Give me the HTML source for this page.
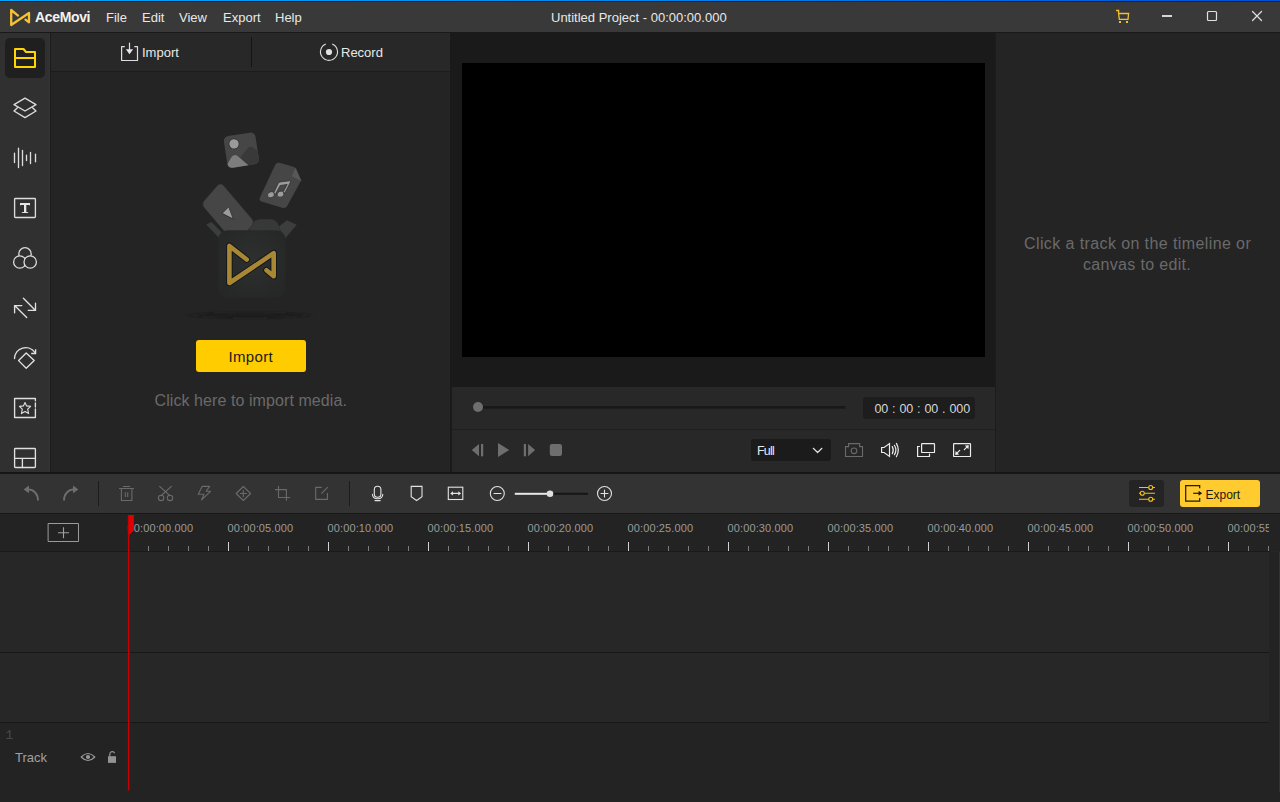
<!DOCTYPE html>
<html><head><meta charset="utf-8">
<style>
*{margin:0;padding:0;box-sizing:border-box}
html,body{width:1280px;height:802px;overflow:hidden;background:#262626;font-family:"Liberation Sans",sans-serif;color:#e6e6e6}
.abs{position:absolute}
.txt{white-space:nowrap;line-height:1}
#topline{left:0;top:0;width:1280px;height:1px;background:linear-gradient(90deg,#00a8ff 0%,#0088f0 50%,#0050d8 100%)}
#topline2{left:0;top:1px;width:1280px;height:1px;background:#1c1c1c}
#title{left:0;top:2px;width:1280px;height:30px;background:#393939}
#tline{left:0;top:32px;width:1280px;height:1px;background:#191919}
#side{left:0;top:33px;width:50px;height:439px;background:#303030;border-right:1px solid #343434}
#sideb{left:50px;top:33px;width:1px;height:439px;background:#1b1b1b}
#media{left:51px;top:33px;width:399px;height:439px;background:#242424}
#mhead{left:51px;top:33px;width:399px;height:38px;background:#282828}
#mheadb{left:51px;top:71px;width:399px;height:1px;background:#1c1c1c}
#prev{left:450px;top:33px;width:546px;height:439px;background:#1a1a1a}
#video{left:462px;top:63px;width:523px;height:294px;background:#000}
#ctrl{left:452px;top:387px;width:543px;height:85px;background:#282828}
#ctrlb{left:452px;top:429px;width:543px;height:1px;background:#1f1f1f}
#props{left:996px;top:33px;width:284px;height:439px;background:#242424}
#propsb{left:995px;top:33px;width:1px;height:439px;background:#1c1c1c}
#midb{left:0;top:472px;width:1280px;height:2px;background:#161616}
#tool{left:0;top:474px;width:1280px;height:39px;background:#333333}
#toolb{left:0;top:513px;width:1280px;height:1px;background:#181818}
#ruler{left:0;top:514px;width:1280px;height:37px;background:#232323}
#rulerb{left:0;top:551px;width:1270px;height:1px;background:#1a1a1a}
#tracks{left:0;top:552px;width:1280px;height:250px;background:#232323}
#trow{left:0;top:552px;width:1269px;height:170px;background:#272727}
#tl1{left:0;top:652px;width:1269px;height:1px;background:#181818}
#tl2{left:0;top:722px;width:1269px;height:1px;background:#181818}
#scr{left:1279px;top:552px;width:1px;height:240px;background:#333}
.tc{top:402.5px;font-size:12.5px;color:#d6d6d6}
.mn{top:11px;font-size:13px;color:#e8e8e8}
.rl{top:523px;font-size:11px;color:#9a9a9a;letter-spacing:0.12px}
</style></head><body>
<div class="abs" id="topline"></div>
<div class="abs" id="topline2"></div>
<div class="abs" id="title"></div>
<div class="abs" id="tline"></div>
<div class="abs" id="side"></div>
<div class="abs" id="sideb"></div>
<div class="abs" id="media"></div>
<div class="abs" id="mhead"></div>
<div class="abs" id="mheadb"></div>
<div class="abs" id="prev"></div>
<div class="abs" id="video"></div>
<div class="abs" id="ctrl"></div>
<div class="abs" id="ctrlb"></div>
<div class="abs" id="propsb"></div>
<div class="abs" id="props"></div>
<div class="abs" id="midb"></div>
<div class="abs" id="tool"></div>
<div class="abs" id="toolb"></div>
<div class="abs" id="ruler"></div>
<div class="abs" id="rulerb"></div>
<div class="abs" id="tracks"></div>
<div class="abs" id="trow"></div>
<div class="abs" id="tl1"></div>
<div class="abs" id="tl2"></div>
<div class="abs" id="scr"></div>

<!-- boxes -->
<div class="abs" style="left:5px;top:38px;width:40px;height:40px;background:#1f1f1f;border-radius:5px"></div>
<div class="abs" style="left:251px;top:37px;width:1px;height:30px;background:#161418"></div>
<div class="abs" style="left:863px;top:397px;width:112px;height:22px;background:#1d1d1d;border-radius:3px"></div>
<div class="abs" style="left:751px;top:439px;width:80px;height:22px;background:#1b1b1b;border-radius:3px"></div>
<div class="abs" style="left:98px;top:481px;width:1px;height:25px;background:#1c1c1c"></div>
<div class="abs" style="left:349px;top:481px;width:1px;height:25px;background:#1c1c1c"></div>
<div class="abs" style="left:1129px;top:480px;width:35px;height:27px;background:#242424;border-radius:3px"></div>
<div class="abs" style="left:1180px;top:480px;width:80px;height:27px;background:#ffcb2e;border-radius:3px"></div>
<div class="abs" style="left:196px;top:340px;width:110px;height:32px;background:#ffcc00;border-radius:3px"></div>

<!-- TITLE TEXT -->
<div class="abs txt" style="left:35px;top:10px;font-size:14px;font-weight:bold;color:#f2f2f2;letter-spacing:-0.35px">AceMovi</div>
<div class="abs txt mn" style="left:106px">File</div>
<div class="abs txt mn" style="left:142px">Edit</div>
<div class="abs txt mn" style="left:179px">View</div>
<div class="abs txt mn" style="left:223px">Export</div>
<div class="abs txt mn" style="left:275px">Help</div>
<div class="abs txt mn" style="left:551px">Untitled Project - 00:00:00.000</div>

<div class="abs txt" style="left:142px;top:46px;font-size:13px;color:#e8e8e8">Import</div>
<div class="abs txt" style="left:341px;top:46px;font-size:13px;color:#e8e8e8">Record</div>

<div class="abs txt" style="left:228.5px;top:349px;font-size:15px;color:#1a1a1a;letter-spacing:0.35px">Import</div>
<div class="abs txt" style="left:154.5px;top:393px;font-size:16px;color:#6a6a6a;letter-spacing:0.08px">Click here to import media.</div>

<div class="abs txt" style="left:1024px;top:236px;font-size:16px;color:#6a6a6a;letter-spacing:0.4px">Click a track on the timeline or</div>
<div class="abs txt" style="left:1083px;top:257px;font-size:16px;color:#6a6a6a;letter-spacing:0.33px">canvas to edit.</div>

<div class="abs txt tc" style="left:874.4px">00</div>
<div class="abs txt tc" style="left:892px">:</div>
<div class="abs txt tc" style="left:899.4px">00</div>
<div class="abs txt tc" style="left:917px">:</div>
<div class="abs txt tc" style="left:924.4px">00</div>
<div class="abs txt tc" style="left:942px">.</div>
<div class="abs txt tc" style="left:949.4px">000</div>
<div class="abs txt" style="left:757px;top:444.5px;font-size:12.5px;color:#e8e8e8;letter-spacing:-0.8px">Full</div>
<div class="abs txt" style="left:1205.5px;top:489px;font-size:12px;color:#1a1a1a">Export</div>

<!-- ruler labels -->
<div class="abs txt rl" style="left:127.5px">00:00:00.000</div>
<div class="abs txt rl" style="left:227.5px">00:00:05.000</div>
<div class="abs txt rl" style="left:327.5px">00:00:10.000</div>
<div class="abs txt rl" style="left:427.5px">00:00:15.000</div>
<div class="abs txt rl" style="left:527.5px">00:00:20.000</div>
<div class="abs txt rl" style="left:627.5px">00:00:25.000</div>
<div class="abs txt rl" style="left:727.5px">00:00:30.000</div>
<div class="abs txt rl" style="left:827.5px">00:00:35.000</div>
<div class="abs txt rl" style="left:927.5px">00:00:40.000</div>
<div class="abs txt rl" style="left:1027.5px">00:00:45.000</div>
<div class="abs txt rl" style="left:1127.5px">00:00:50.000</div>
<div class="abs" style="left:1270px;top:514px;width:10px;height:37px;background:#232323"></div>
<div class="abs txt rl" style="left:1227.5px;width:41.5px;overflow:hidden">00:00:55.000</div>

<div class="abs txt" style="left:5.3px;top:729px;font-size:13.5px;color:#484848;font-family:'Liberation Mono',monospace">1</div>
<div class="abs txt" style="left:15px;top:751px;font-size:13px;color:#a0a0a0">Track</div>

<!-- ICONS -->
<svg class="abs" style="left:0;top:0" width="1280" height="802" viewBox="0 0 1280 802" fill="none" stroke-linecap="round" stroke-linejoin="round">
  <!-- logo -->
  <path d="M18,15.6L11.2,10V25L29,13V22.3L25.5,19.6" stroke="#f6c232" stroke-width="2.3"/>
  <!-- cart -->
  <g stroke="#f0c030" stroke-width="1.3" stroke-linecap="butt" stroke-linejoin="miter">
    <path d="M1116,10.5H1118.6V13.5"/>
    <path d="M1118.6,13.5H1128.6L1128,19.4H1119.3Z"/>
  </g>
  <rect x="1119" y="21" width="2" height="2" fill="#f0c030"/>
  <rect x="1126" y="21" width="2" height="2" fill="#f0c030"/>
  <!-- window controls -->
  <rect x="1162" y="15" width="10" height="2" fill="#d6d6d6"/>
  <rect x="1207.5" y="11.5" width="9" height="9" stroke="#e0e0e0" stroke-width="1.2" rx="1"/>
  <path d="M1252.5,11.5L1261.5,20.5M1261.5,11.5L1252.5,20.5" stroke="#e0e0e0" stroke-width="1.2"/>

  <!-- sidebar -->
  <path d="M15,49H23.5L26,52H35V67H15ZM15,58H35" stroke="#ffd400" stroke-width="2" stroke-linejoin="round"/>
  <g stroke="#dcdcdc" stroke-width="1.35">
    <path d="M25,98.2L36,104.6L25,111L14,104.6Z"/>
    <path d="M17.4,107.8L14,111L25,117.6L36,111L32.6,107.8"/>
    <path d="M14.5,153.2V162.6M18.5,148.2V167.6M22.5,150.3V165.6M26.5,155.2V160.6M30.5,152.3V163.6M35.5,154.2V161.8"/>
    <rect x="14.6" y="198.5" width="20.8" height="19" rx="0.8"/>
  </g>
  <path d="M20,203H30V205.9L29.4,204.9H26.3V212L28.2,212.2V213H21.8V212.2L24,212V204.9H20.6L20,205.9Z" fill="#e6e6e6"/>
  <g stroke="#dcdcdc" stroke-width="1.3" fill="#303030">
    <circle cx="25" cy="253.9" r="6.2"/>
    <circle cx="19.8" cy="262" r="6.2"/>
    <circle cx="30.2" cy="262" r="6.2"/>
  </g>
  <g stroke="#e0e0e0" stroke-width="1.35">
    <path d="M21.8,305.6H14.6V312.8M14.6,305.6L26.7,317.6"/>
    <path d="M28.3,310.4H35.5V303.2M35.5,310.4L23.4,298.3"/>
    <path d="M26.2,353L34.2,360.6L26.2,368.3L18.6,360.6Z"/>
    <path d="M14.5,358.6A11.2,11.2 0 0 1 35,352.6"/>
    <path d="M35.6,349.2V353.5H31.2" stroke-linecap="butt" stroke-linejoin="miter"/>
    <path d="M35.4,400.8V398.5H14.6V417.5H35.4V409M35.4,403V407"/>
    <path d="M25,402.6L26.6,405.9L30.6,406.4L27.7,409.1L28.6,413.6L25,411.5L21.4,413.6L22.3,409.1L19.4,406.4L23.4,405.9Z" stroke-width="1.1"/>
    <rect x="14.6" y="448.5" width="20.8" height="19" rx="0.8"/>
    <path d="M14.6,458.3H35.4M22.4,458.3V467.5"/>
  </g>

  <!-- media header icons -->
  <g stroke="#dedede" stroke-width="1.2">
    <path d="M124.8,46.6H121.6V60.5H137.5V46.6H134.3" stroke-linecap="butt" stroke-linejoin="round"/>
    <path d="M129.5,43V50"/>
  </g>
  <path d="M125.9,49.3H133.1L129.5,54.2Z" fill="#e6e6e6"/>
  <path d="M332.2,44A8.5,8.5 0 1 1 325.8,44" stroke="#dedede" stroke-width="1.1" stroke-linecap="butt"/>
  <circle cx="329" cy="52" r="3.1" fill="#e0e0e0"/>

  <!-- preview controls -->
  <circle cx="478" cy="407" r="5" fill="#6e6e6e"/>
  <rect x="483" y="406" width="362.5" height="2.6" fill="#181818"/>
  <path d="M479,444V456.3L471.8,450.1Z" fill="#6e6e6e"/>
  <rect x="481" y="444" width="2.2" height="12.3" fill="#6e6e6e"/>
  <path d="M498,443V457L509.2,450Z" fill="#6e6e6e"/>
  <rect x="523.8" y="444" width="2.2" height="12.3" fill="#6e6e6e"/>
  <path d="M528.1,444V456.3L535.1,450.1Z" fill="#6e6e6e"/>
  <rect x="549.8" y="444" width="12.2" height="12" rx="2.2" fill="#6e6e6e"/>
  <path d="M813.3,448.3L817.6,452.5L821.9,448.3" stroke="#e0e0e0" stroke-width="1.2"/>
  <g stroke="#6a6a6a" stroke-width="1.1">
    <path d="M845.5,456.5V446.6H848.6V443.6H859.6V446.6H862.5V456.5Z" stroke-linejoin="miter"/>
    <circle cx="854" cy="450.8" r="2.8"/>
  </g>
  <g stroke="#ececec" stroke-width="1.2">
    <path d="M881.6,447.5H884.1L889.5,443.6V456.4L884.1,452.5H881.6Z" stroke-linejoin="miter"/>
    <path d="M892.3,446.6Q894.2,450.1 892.3,453.7M894.4,445.3Q897.4,450.1 894.4,454.8M896.4,443.4Q900.2,450.1 896.4,456.7"/>
    <path d="M919.5,446.5H917.6V456.5H929.5V454.2" stroke-linejoin="miter"/>
    <rect x="921.6" y="443.6" width="12.9" height="8.9" rx="0.6"/>
    <rect x="953.6" y="443.6" width="16.9" height="12.9" rx="0.6"/>
    <path d="M956.5,453.6L959.7,450.4M964.3,449.6L967.8,446.1"/>
  </g>
  <path d="M955.2,454.9L955.6,450.9L959.2,454.5Z M968.8,445.2L968.4,449.2L964.8,445.6Z" fill="#ececec"/>

  <!-- toolbar -->
  <g stroke="#6e6e6e" stroke-width="1.9" stroke-linecap="butt">
    <path d="M28,489.4C34,489.4 38,494 38,500.6"/>
    <path d="M74,489.4C68,489.4 64,494 64,500.6"/>
  </g>
  <path d="M23.6,489.4L29,485.6V493.2Z M78.4,489.4L73,485.6V493.2Z" fill="#6e6e6e"/>
  <g stroke="#6a6a6a" stroke-width="1.1" stroke-linecap="butt" stroke-linejoin="miter">
    <path d="M119,488.5H134M123,486.5H130M121.4,488.5V500.5H131.9V488.5M125.3,492.3V497M127.7,492.3V497"/>
    <path d="M159.3,486.2L170.3,496M171.7,486.2L160.7,496"/>
    <circle cx="161.1" cy="497.9" r="2.7"/>
    <circle cx="170" cy="497.9" r="2.7"/>
    <path d="M202.1,486.4H209.6L206.1,491.3H210.5L201.6,499.9L204,494.3H198.3Z" stroke-linejoin="round"/>
    <path d="M243.3,486.5L250.6,493.5L243.3,500.5L236.2,493.5Z" stroke-linejoin="round"/>
    <path d="M240,493.5H246.8M243.3,490V497"/>
    <path d="M278.5,486V497.5H290M275,489.6H286.4V500.8"/>
    <path d="M321.7,487.4H315.7V499.4H327.4V493.1M321.4,493.7L327.7,487.1"/>
  </g>
  <g stroke="#e2e2e2" stroke-width="1.1">
    <rect x="374.3" y="486.2" width="6.6" height="11" rx="3.3"/>
    <path d="M372.4,494.3Q372.6,498.8 377.6,498.8Q382.6,498.8 382.8,494.3M375,500.6H380.2"/>
    <path d="M411.2,486.4H422V496.8L416.6,500.5L411.2,496.8Z" stroke-linejoin="miter"/>
    <rect x="448.3" y="487.2" width="14.5" height="12.3" stroke-linejoin="miter"/>
    <path d="M452,493.4H459.5"/>
    <circle cx="497.3" cy="493.5" r="7"/>
    <path d="M494,493.5H501"/>
    <circle cx="604.5" cy="493.5" r="7"/>
    <path d="M601,493.5H608M604.5,490V497"/>
  </g>
  <path d="M450.2,493.4L453,491.2V495.6Z M461.1,493.4L458.3,491.2V495.6Z" fill="#e2e2e2"/>
  <rect x="514.8" y="492.8" width="35" height="2" fill="#e8e8e8"/>
  <rect x="550" y="492.8" width="38" height="2" fill="#161616"/>
  <circle cx="550" cy="493.8" r="3.3" fill="#e0e0e0"/>
  <g stroke="#f0c020" stroke-width="1.1" stroke-linecap="butt">
    <path d="M1139,487.5H1148.7M1152.7,487.5H1155M1139,493.3H1140.3M1144.3,493.3H1155M1139,499.2H1148.7M1152.7,499.2H1155"/>
    <circle cx="1150.7" cy="487.5" r="2"/>
    <circle cx="1142.3" cy="493.3" r="2"/>
    <circle cx="1150.7" cy="499.2" r="2"/>
  </g>
  <g stroke="#1a1a1a" stroke-width="1.2" stroke-linejoin="miter" stroke-linecap="butt">
    <path d="M1199.7,488.3V485.6H1185.7V501.1H1199.7V498"/>
    <path d="M1193.2,493.3H1199"/>
  </g>
  <path d="M1202.2,493.3L1198.6,490.8V495.8Z" fill="#1a1a1a"/>

  <!-- ruler -->
  <rect x="48.5" y="523.5" width="30" height="18" stroke="#9a9a9a" stroke-width="1"/>
  <path d="M58,532.8H69M63.5,527.3V538.3" stroke="#a0a0a0" stroke-width="1.1" stroke-linecap="butt"/>
  <path d="M148.5,546V551M168.5,546V551M188.5,546V551M208.5,546V551M248.5,546V551M268.5,546V551M288.5,546V551M308.5,546V551M348.5,546V551M368.5,546V551M388.5,546V551M408.5,546V551M448.5,546V551M468.5,546V551M488.5,546V551M508.5,546V551M548.5,546V551M568.5,546V551M588.5,546V551M608.5,546V551M648.5,546V551M668.5,546V551M688.5,546V551M708.5,546V551M748.5,546V551M768.5,546V551M788.5,546V551M808.5,546V551M848.5,546V551M868.5,546V551M888.5,546V551M908.5,546V551M948.5,546V551M968.5,546V551M988.5,546V551M1008.5,546V551M1048.5,546V551M1068.5,546V551M1088.5,546V551M1108.5,546V551M1148.5,546V551M1168.5,546V551M1188.5,546V551M1208.5,546V551M1248.5,546V551M1268.5,546V551" stroke="#7c7c7c" stroke-width="1" stroke-linecap="butt"/>
  <path d="M128.5,542V551M228.5,542V551M328.5,542V551M428.5,542V551M528.5,542V551M628.5,542V551M728.5,542V551M828.5,542V551M928.5,542V551M1028.5,542V551M1128.5,542V551M1228.5,542V551" stroke="#d2d2d2" stroke-width="1" stroke-linecap="butt"/>
  <!-- playhead -->
  <path d="M127.9,515H133.9V530.2L129.3,535H127.9Z" fill="#e00000"/>
  <rect x="127.9" y="515" width="1.4" height="275.5" fill="#c80000"/>

  <!-- track header icons -->
  <path d="M81.2,757Q88,750 94.8,757Q88,764 81.2,757Z" stroke="#999" stroke-width="1.2"/>
  <circle cx="88" cy="757" r="2.1" fill="#999"/>
  <rect x="108" y="756.2" width="8" height="6.7" fill="#939393"/>
  <path d="M109.8,756.5V754A2.5,2.5 0 0 1 114.6,753.2" stroke="#939393" stroke-width="1.2" stroke-linecap="butt"/>

  <!-- media illustration -->
  <defs>
    <radialGradient id="bg1" cx="0.5" cy="0.45" r="0.6">
      <stop offset="0" stop-color="#2e2f2f"/>
      <stop offset="1" stop-color="#262727"/>
    </radialGradient>
    <filter id="blr" x="-50%" y="-300%" width="200%" height="700%" filterUnits="objectBoundingBox"><feGaussianBlur stdDeviation="6 1.2"/></filter>
    <linearGradient id="shd" x1="0" y1="0" x2="1" y2="0">
      <stop offset="0" stop-color="#242424" stop-opacity="0"/>
      <stop offset="0.5" stop-color="#1a1a1a"/>
      <stop offset="1" stop-color="#242424" stop-opacity="0"/>
    </linearGradient>
  </defs>
  <ellipse cx="250" cy="315.3" rx="56" ry="2.4" fill="#1a1a1a" filter="url(#blr)"/>
  <g transform="rotate(-8.9 241.4 150.2)">
    <rect x="225.4" y="134.2" width="32" height="32" rx="5" fill="#464646"/>
    <circle cx="235.1" cy="142.8" r="5.4" fill="#2e2e2e"/>
    <circle cx="235.1" cy="142.8" r="4.7" fill="#9a9a9a"/>
    <path d="M239,157.5L247,150Q250.4,146.5 254,150L257.4,153.4V161.2Q257.4,166.2 252.4,166.2H244Z" fill="#393939"/>
    <path d="M225.4,162L230,156Q233,152.5 236.5,155L246,166.2H230.4Q225.4,166.2 225.4,161.2Z" fill="#7d7d7d"/>
  </g>
  <path d="M279.5,162.8L293.5,166.8Q295.5,167.4 296.5,169.3L301.3,180.2L287,206.3Q285.6,208.6 283,208L261.5,201.4Q258.7,200.4 259.8,197.7L275,165.2Q276.5,162.3 279.5,162.8Z" fill="#464646"/>
  <path d="M295.3,167.9L301.3,181L291.8,176.2Z" fill="#585858"/>
  <g fill="#9c9c9c" stroke="#2c2c2c" stroke-width="0.7">
    <path d="M273.3,193.8L278.3,183.2Q278.8,182.2 280,182L289.6,180.8Q291,180.7 290.5,182L284.8,193.2L282.9,192.4L287.2,184.4L280.2,185.5L275.2,194.6Z"/>
    <ellipse cx="271" cy="194.8" rx="3.6" ry="2.9" transform="rotate(-20 271 194.8)"/>
    <ellipse cx="280.6" cy="194.2" rx="3.6" ry="2.9" transform="rotate(-20 280.6 194.2)"/>
  </g>
  <path d="M206.2,224.4L211.5,222.1L221.9,232.6L218.9,237.8Z" fill="#3c3d3d"/>
  <path d="M286.9,220.2L296.7,224.7L284.2,239.5L278.8,226.5Z" fill="#3c3d3d"/>
  <path d="M249,232Q250,219.3 261,219.3H270Q279,219.3 280,232Z" fill="#373838"/>
  <g transform="matrix(0.649,0.762,-0.655,0.753,220.5,181.9)">
    <rect x="0" y="0" width="53" height="29.6" rx="4.5" fill="#464646" stroke="#2a2a2a" stroke-width="0.6"/>
  </g>
  <path d="M222.3,213.2L228.7,206.8L233.2,218.8Z" fill="#9c9c9c" stroke="#2e2e2e" stroke-width="0.8" stroke-linejoin="round"/>
  <rect x="218.4" y="230.2" width="67" height="67.5" rx="9" fill="url(#bg1)"/>
  <path d="M246.7,259.5L229.4,246V283L273.7,253.2V276.3L266.5,270.3" stroke="#161718" stroke-width="6.6"/>
  <path d="M246.7,259.5L229.4,246V283L273.7,253.2V276.3L266.5,270.3" stroke="#a98835" stroke-width="4.6"/>
</svg>

</body></html>
